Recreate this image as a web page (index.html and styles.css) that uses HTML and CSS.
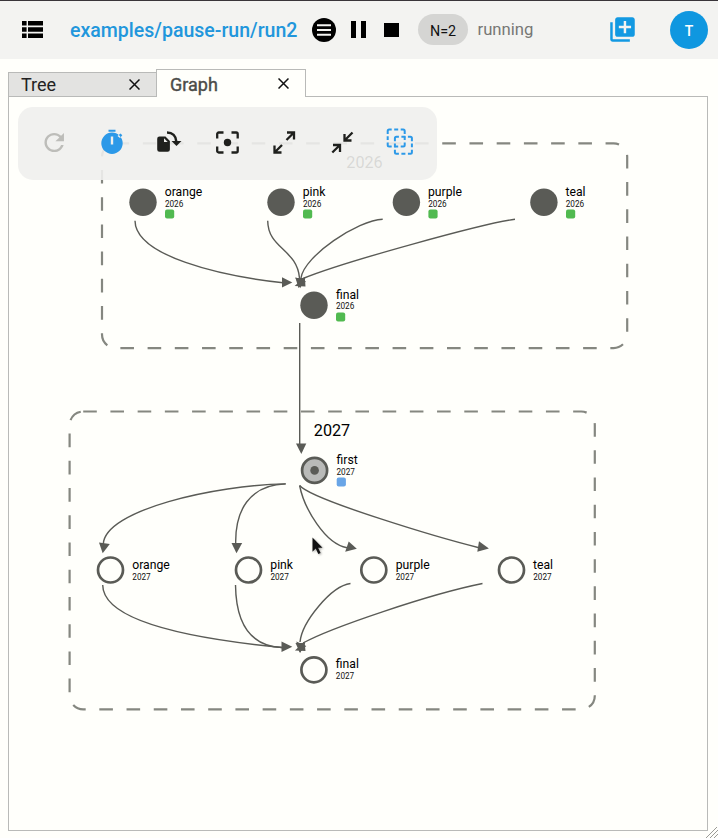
FILE: index.html
```
<!DOCTYPE html>
<html lang="en">
<head>
<meta charset="utf-8">
<title>examples/pause-run/run2</title>
<link rel="stylesheet" href="styles.css">
</head>
<body>
<header class="topbar">
  <svg class="nav-icon" width="21" height="17" viewBox="0 0 21 17"><path d="M0 0h4.600v4.600H0zM6 0h15v4.600H6zM0 6.200h4.600v4.600H0zM6 6.200h15v4.600H6zM0 12.400h4.600V17H0zM6 12.400h15V17H6z"/></svg>
  <a class="title">examples/pause-run/run2</a>
  <div class="controls">
    <svg width="24" height="24" viewBox="0 0 24 24"><circle cx="12" cy="12" r="12"/><path d="M5 7.200h14M5 12h14M5 16.800h14" stroke="#f3f3f1" stroke-width="2.100"/></svg>
    <svg width="15" height="17" viewBox="0 0 15 17"><path d="M0 0h5v17H0zM10 0h5v17h-5z"/></svg>
    <svg class="stop" width="15" height="14" viewBox="0 0 15 14"><path d="M0 0h15v14H0z"/></svg>
  </div>
  <span class="chip">N=2</span>
  <span class="status">running</span>
  <svg class="add-icon" width="25" height="25" viewBox="1.800 1.800 20.400 20.400"><path fill="#1399e2" d="M4 6H2v14c0 1.100.9 2 2 2h14v-2H4V6zm16-4H8c-1.100 0-2 .9-2 2v12c0 1.100.9 2 2 2h12c1.100 0 2-.9 2-2V4c0-1.100-.9-2-2-2zm-1 9h-4v4h-2v-4H9V9h4V5h2v4h4v2z"/></svg>
  <span class="avatar">T</span>
</header>
<main class="workspace">
  <nav class="tabs">
    <div class="tab">Tree<svg width="11" height="11" viewBox="0 0 11 11"><path d="M.5.5l10 10M10.500.5l-10 10"/></svg></div>
    <div class="tab active">Graph<svg width="11" height="11" viewBox="0 0 11 11"><path d="M.5.5l10 10M10.500.5l-10 10"/></svg></div>
  </nav>
  <section class="panel">
    <svg class="graph" width="698" height="733" viewBox="9 97 698 733">
      <g class="cycle">
        <rect x="102" y="143.300" width="525.200" height="204.800" rx="13.600"/>
        <rect x="69.600" y="411.500" width="525.200" height="297.800" rx="13.600"/>
      </g>
      <g class="cycle-label"><text x="346.300" y="168">2026</text><text x="313.800" y="436">2027</text></g>
      <g class="edge">
        <path d="M135 220.700C135.500 256 220 276 283 282.700"/>
        <path d="M267.700 220.700C268 249 297 249 299.500 278"/>
        <path d="M382.700 219.300C358 220 304 256 301 278"/>
        <path d="M515 219.300C485 223 343 262 303 278.500"/>
        <path d="M299.700 323V445"/>
        <path d="M285.700 483.900C215 485 105 510 103.300 544"/>
        <path d="M285.700 483.900C249 485 235 511 235.700 544"/>
        <path d="M299.600 485.500C304 508 325 544 347 547.700"/>
        <path d="M299.600 485.500C312 500 440 538 479 547.700"/>
        <path d="M102.700 585C103 624 205 640 282 647.500"/>
        <path d="M235.500 585C236 622 249 646 282 647.500"/>
        <path d="M350.500 583.500C331 586 302 622 300 642"/>
        <path d="M482.500 583.500C430 594 330 628 303 643"/>
      </g>
      <g class="arrow">
        <path d="M282 277.300V287.500L292.300 282.500z"/>
        <path d="M295.500 278H305.200L300.200 288.300z"/>
        <path d="M295.300 277.300L306 281.500L298.500 288z"/>
        <path d="M304.800 277L294.600 286L305.500 286.500z"/>
        <path d="M296 443.600H306.300L301.300 454z"/>
        <path d="M99 542.500L109.800 544L102.700 553.300z"/>
        <path d="M231.500 543.100H242.200L236.500 553.300z"/>
        <path d="M348.700 541.500L345.200 551.700L356.800 548.800z"/>
        <path d="M479 541.300L477.300 551.800L488.900 548.500z"/>
        <path d="M281.500 641.400V652L292.300 646.800z"/>
        <path d="M295.500 643H305.200L300.200 653z"/>
        <path d="M296.300 641.500L306.300 646L299.500 652.500z"/>
        <path d="M304.500 641.500L294.900 650.500L305.500 651z"/>
      </g>
      <g class="done">
        <circle cx="143" cy="202.300" r="13.700"/><circle cx="281" cy="202.300" r="13.700"/><circle cx="406.400" cy="202.300" r="13.700"/><circle cx="543.900" cy="202.300" r="13.700"/><circle cx="314" cy="305.300" r="13.700"/>
      </g>
      <g class="waiting">
        <circle class="active-node" cx="314.600" cy="470.400" r="12.500"/>
        <circle cx="110.500" cy="570" r="12.500"/><circle cx="248.500" cy="570" r="12.500"/><circle cx="373.800" cy="570" r="12.500"/><circle cx="511.500" cy="570" r="12.500"/><circle cx="313.900" cy="669.800" r="12.500"/>
      </g>
      <circle class="core" cx="314.600" cy="470.400" r="4.300"/>
      <g class="name">
        <text x="164.700" y="196">orange</text><text x="302.700" y="196">pink</text><text x="428" y="196">purple</text><text x="565.500" y="196">teal</text><text x="335.900" y="299">final</text>
        <text x="336.500" y="464">first</text><text x="132.200" y="569">orange</text><text x="270.300" y="569">pink</text><text x="395.700" y="569">purple</text><text x="533" y="569">teal</text><text x="335.800" y="668">final</text>
      </g>
      <g class="point">
        <text x="164.900" y="206.800">2026</text><text x="302.900" y="206.800">2026</text><text x="428.200" y="206.800">2026</text><text x="565.700" y="206.800">2026</text><text x="335.900" y="309">2026</text>
        <text x="336.500" y="475">2027</text><text x="132.300" y="580">2027</text><text x="270.400" y="580">2027</text><text x="395.700" y="580">2027</text><text x="533.200" y="580">2027</text><text x="335.800" y="679">2027</text>
      </g>
      <g class="job">
        <rect x="165" y="209.500" width="9.200" height="9" rx="2"/><rect x="303" y="209.500" width="9.200" height="9" rx="2"/><rect x="428.400" y="209.500" width="9.200" height="9" rx="2"/><rect x="566" y="209.500" width="9.200" height="9" rx="2"/><rect x="336" y="312.400" width="9.200" height="9" rx="2"/>
        <rect class="running" x="336.700" y="477.500" width="9.200" height="9" rx="2"/>
      </g>
      <path class="pointer" d="M312.500 537.500V551.700L315.700 548.600L318.300 554L320.600 552.900L318.100 547.800H322.500z"/>
    </svg>
    <div class="tools">
      <svg viewBox="0 0 24 24" fill="#bdbdb9"><path d="M17.650 6.350C16.200 4.900 14.210 4 12 4c-4.420 0-7.990 3.580-7.990 8s3.570 8 7.990 8c3.730 0 6.840-2.550 7.730-6h-2.080c-.82 2.330-3.040 4-5.650 4-3.310 0-6-2.690-6-6s2.690-6 6-6c1.660 0 3.140.69 4.220 1.780L13 11h7V4l-2.350 2.350z" transform="translate(12.200 12.500) scale(1.220 1.200) translate(-12 -12)"/></svg>
      <svg viewBox="0 0 24 24" fill="#2c99e8"><path d="M8.500-.200h7v2h-7zM12 2.500A10.700 10.700 0 1 0 12 23.900A10.700 10.700 0 1 0 12 2.500zM17.500 6L20.500 3.500l1.800 1.800L20 8z"/><path d="M10.800 6.500h2.400v8h-2.400z" fill="#efefed"/></svg>
      <svg viewBox="0 0 24 24" fill="#1f201d"><path d="M2.500 6.500h6L12.900 11v8.500a2.300 2.300 0 0 1-2.300 2.300H2.500A2.300 2.300 0 0 1 .2 19.500V8.800A2.300 2.300 0 0 1 2.500 6.500z"/><path d="M7 8.300v3.800h3.700z" fill="#efefed"/><path d="M10 2.500c5.500 0 9 3.500 9.300 9" fill="none" stroke="#1f201d" stroke-width="2.500"/><path d="M14.500 11h10l-5 5z"/></svg>
      <svg viewBox="0 0 24 24" fill="none" stroke="#1f201d" stroke-width="2.300"><path d="M2.200 8.500V4a1.500 1.500 0 0 1 1.500-1.500H8.500M16.500 2.500h4.700a1.500 1.500 0 0 1 1.500 1.500V8.500M22.700 16.500v4.500a1.500 1.500 0 0 1-1.500 1.500H16.500M8.500 22.500H3.700a1.500 1.500 0 0 1-1.500-1.500V16.500"/><circle cx="12.500" cy="12.500" r="3.700" fill="#1f201d" stroke="none"/></svg>
      <svg viewBox="0 0 24 24" fill="none" stroke="#1f201d" stroke-width="2.300"><path d="M15 2.500H22V9.500M21.700 2.800L14.500 10M9.500 22.500H2.500V15.500M2.800 22.200L10 15"/></svg>
      <svg viewBox="0 0 24 24" fill="none" stroke="#1f201d" stroke-width="2.300"><path d="M14.500 4V10.500H21.500M14.800 10.200L22.500 2.500M3 15H10V22M9.700 15.300L2.300 22.500"/></svg>
      <svg viewBox="0 0 24 24" fill="none" stroke="#2c99e8" stroke-width="2"><g transform="translate(.7 -.5)"><path id="marquee" d="M0 4.500V1.500Q0 0 1.500 0H4M6.500 0H10.500M13 0H15.500Q17 0 17 1.500V4.500M0 6.800V10.500M0 13V15.500Q0 17 1.500 17H4M6.500 17H10.500M13 17H15.500Q17 17 17 15.500V13M17 6.800V10.500"/><use href="#marquee" x="7.200" y="7.200"/></g></svg>
    </div>
  </section>
</main>
<svg class="grip" width="12" height="11" viewBox="0 0 12 11"><path d="M0 11L11 0M4 11L12 3M8 11L12 7"/></svg>
</body>
</html>
```
FILE: styles.css
```
* { box-sizing: border-box; }
body { margin: 0; height: 838px; overflow: hidden; background: #fffffb; font-family: Roboto, sans-serif; color: #111; }
svg { display: block; flex: none; }
.topbar { height: 59px; border-top: 1px solid #39353a; background: #f3f3f1; display: flex; align-items: center; padding: 0 10px 1px 22px; }
.title { width: 228px; margin-left: 27px; font-size: 19.550px; font-weight: 500; color: #2196dc; white-space: nowrap; line-height: 24px; position: relative; top: 1px; }
.controls { display: flex; align-items: center; margin-left: 14px; }
.controls svg + svg { margin-left: 15px; }
.controls .stop { margin-left: 18px; }
.chip { width: 50px; height: 31px; margin-left: 19px; border-radius: 16px; background: #d5d5d3; display: flex; align-items: center; justify-content: center; font-size: 14.300px; padding-top: 2px; }
.status { width: 60px; margin-left: 9.500px; font-size: 16.700px; color: #777775; }
.add-icon { margin-left: 72.500px; }
.avatar { width: 38px; height: 38px; margin-left: auto; border-radius: 50%; background: #0f97e0; color: #fff; display: flex; align-items: center; justify-content: center; font-size: 14px; font-weight: 500; padding-top: 2px; }
.workspace { padding: 10px 10px 0 8px; }
.tabs { height: 28px; display: flex; align-items: flex-end; margin-bottom: -1px; position: relative; z-index: 1; }
.tab { width: 148px; height: 25px; border: 1px solid #b9bab8; border-right: 0; background: #e3e3e1; display: flex; align-items: center; justify-content: space-between; padding: 0 16px 0 12px; font-size: 18px; color: #222; }
.tab svg { stroke: #111; stroke-width: 1.500; fill: none; }
.tab.active { width: 150px; height: 28px; border-right: 1px solid #b9bab8; border-bottom: 0; background: #fffffb; -webkit-text-stroke: .4px #4c4c49; color: #4c4c49; padding: 2px 16px 0 13px; }
.tab.active svg { margin-bottom: 2px; }
.panel { height: 735px; border: 1px solid #b9bab8; position: relative; }
.tools { position: absolute; left: 9px; top: 10px; width: 419px; height: 73px; border-radius: 15px; background: rgba(239,239,237,.9); display: flex; align-items: center; gap: 33.500px; padding: 0 24px; }
.tools svg { width: 24px; height: 24px; overflow: visible; position: relative; top: -2px; }
.cycle rect { fill: none; stroke: #858780; stroke-width: 2.200; stroke-dasharray: 13.600 13.620; }
.cycle-label { font-size: 16.200px; }
.edge { fill: none; stroke: #5a5b56; stroke-width: 1.400; }
.arrow, .done, .core { fill: #5a5b56; }
.waiting { fill: #fffffb; stroke: #5a5b56; stroke-width: 2.700; }
.active-node { fill: #b9bab8; }
.name { font-size: 12.200px; fill: #000; }
.point { font-size: 8.200px; fill: #111; }
.job { fill: #51ba50; }
.running { fill: #69a5e6; }
.pointer { fill: #111; filter: drop-shadow(1px 1px 1px rgba(0,0,0,.35)); }
.grip { position: absolute; right: 0; bottom: 0; fill: none; stroke: #9b9b97; }
```
